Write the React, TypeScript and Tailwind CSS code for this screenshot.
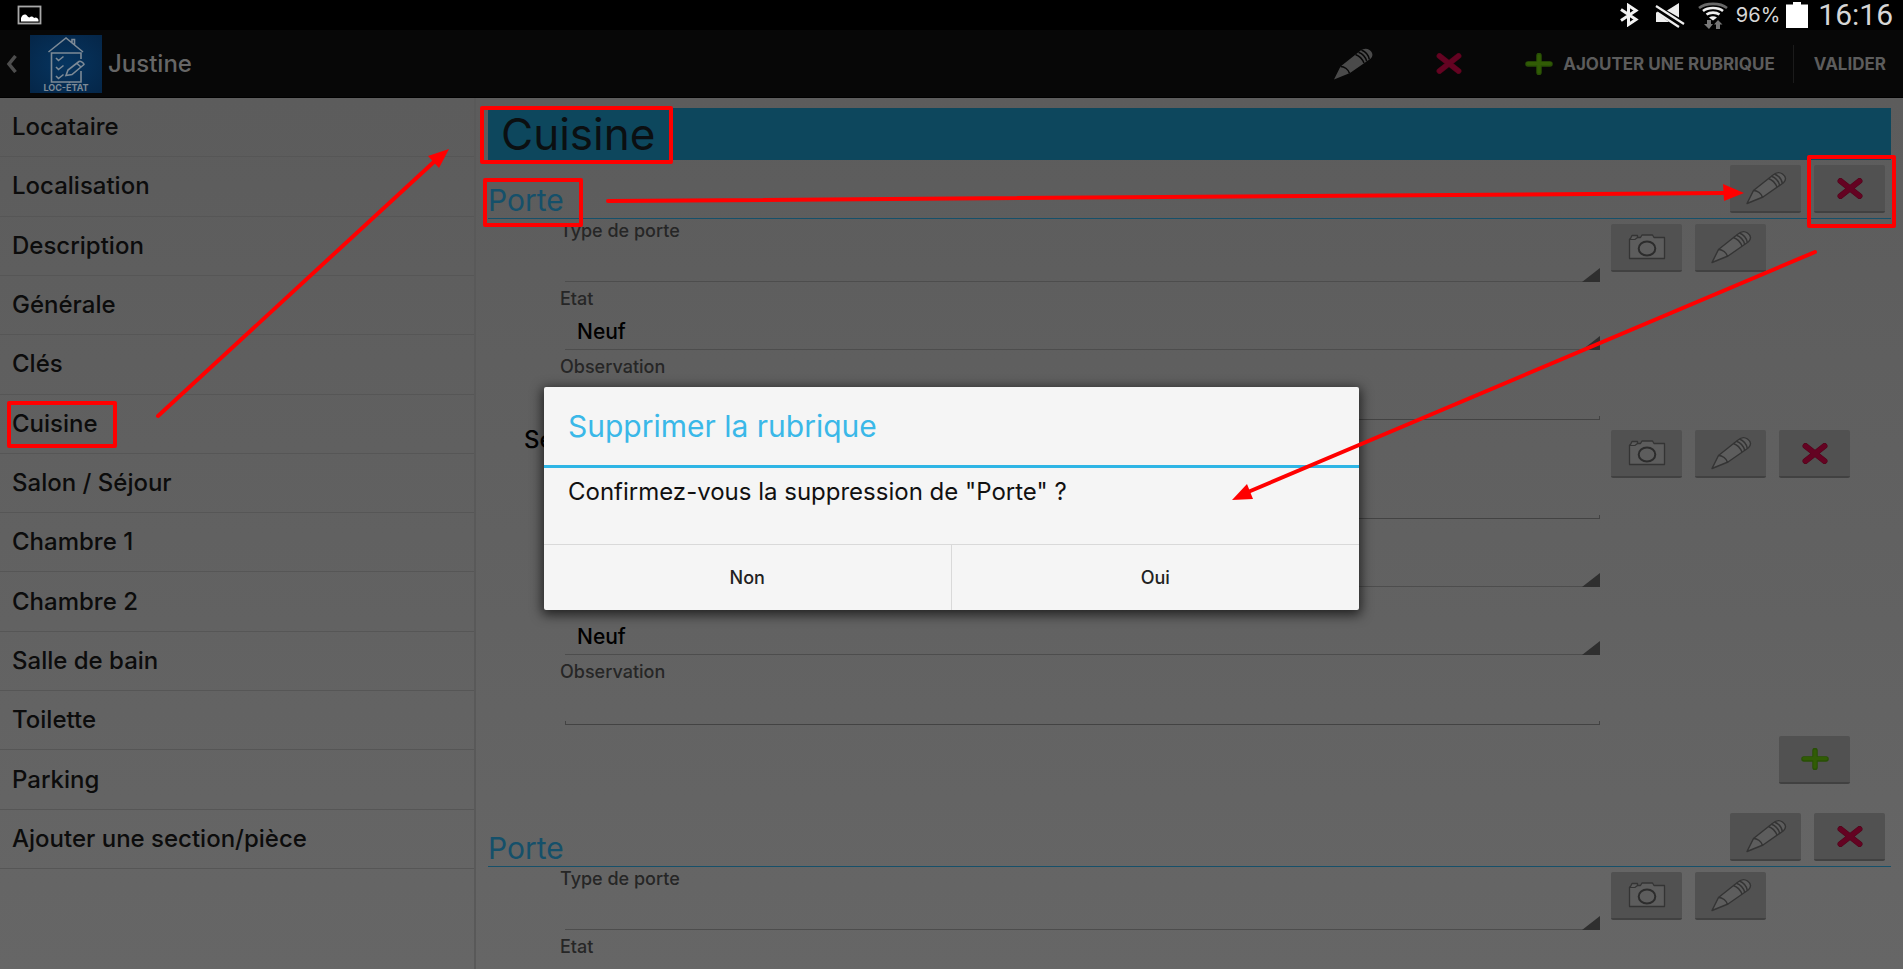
import { useState } from "react";
import type { ReactNode } from "react";

type Field = { label: string; kind: "select" | "text"; value?: string };
type Item = { id: string; title?: string; fields: Field[]; removable?: boolean };
type Section = { id: string; title: string; items: Item[] };

const ROOMS = [
  "Locataire",
  "Localisation",
  "Description",
  "Générale",
  "Clés",
  "Cuisine",
  "Salon / Séjour",
  "Chambre 1",
  "Chambre 2",
  "Salle de bain",
  "Toilette",
  "Parking",
  "Ajouter une section/pièce",
];

const DOOR_FIELDS: Field[] = [
  { label: "Type de porte", kind: "select" },
  { label: "Etat", kind: "select", value: "Neuf" },
  { label: "Observation", kind: "text" },
];

const LOCK_FIELDS: Field[] = [
  { label: "Nombre", kind: "text" },
  { label: "Type", kind: "select" },
  { label: "Etat", kind: "select", value: "Neuf" },
  { label: "Observation", kind: "text" },
];

const SECTIONS: Section[] = [
  {
    id: "porte-1",
    title: "Porte",
    items: [
      { id: "porte-1-a", fields: DOOR_FIELDS },
      { id: "porte-1-b", title: "Serrure", fields: LOCK_FIELDS, removable: true },
    ],
  },
  {
    id: "porte-2",
    title: "Porte",
    items: [{ id: "porte-2-a", fields: DOOR_FIELDS }],
  },
];

function PencilIcon({ solid = false }: { solid?: boolean }) {
  const fill = solid ? "#4a4a4a" : "#5d5d5d";
  const line = solid ? "#070707" : "#343434";
  return (
    <svg width="42" height="34" viewBox="0 0 42 34" fill="none" aria-hidden="true">
      <path
        d="M2 32.5 8.5 19.5 28 4C31 1.5 34.500 .8 37.500 3C41 5.500 41.500 9 38.500 11.700L18 26Z"
        fill={fill}
        stroke={solid ? "none" : line}
        strokeWidth="1.400"
        strokeLinejoin="round"
      />
      <path
        d="M8.500 19.500C12.500 19.500 16.500 22.500 17.500 26.300M23.500 7.500C27.500 9 30.500 12.500 32 16M26.500 5.200C30.500 6.700 33.500 10 34.700 14.200M29.500 3C33 4.500 36.500 8 37.300 12.300"
        stroke={line}
        strokeWidth="1.500"
      />
    </svg>
  );
}

function CameraIcon() {
  return (
    <svg width="38" height="26" viewBox="0 0 38 26" fill="none" aria-hidden="true">
      <path
        d="M1.500 5V24.500H36.500V3.500H26L24.500 1H14L12.500 3.500H9.500V1.500H4L2.500 4.500Z"
        fill="#5d5d5d"
        stroke="#343434"
        strokeWidth="1.300"
        strokeLinejoin="round"
      />
      <path d="M2 5.500H7L9.500 3.500" stroke="#343434" strokeWidth="1.200" />
      <ellipse cx="19" cy="14.500" rx="8.300" ry="7" stroke="#2c2c2c" strokeWidth="2" />
    </svg>
  );
}

function CrossIcon() {
  return (
    <svg width="26" height="21" viewBox="0 0 26 21" aria-hidden="true">
      <path d="M3.500 3 22.500 18M22.500 3 3.500 18" stroke="#4f0519" strokeWidth="6" strokeLinecap="round" />
      <path d="M3.500 3 22.500 18M22.500 3 3.500 18" stroke="#640322" strokeWidth="4.800" strokeLinecap="round" />
    </svg>
  );
}

function PlusIcon() {
  return (
    <svg width="28" height="22" viewBox="0 0 28 22" aria-hidden="true">
      <path d="M3 11H25M14 2.500V19.500" stroke="#284f06" strokeWidth="5.500" strokeLinecap="round" />
      <path d="M3 10.500H25M14 3V19" stroke="#315c05" strokeWidth="3.500" strokeLinecap="round" />
    </svg>
  );
}

function Logo() {
  return (
    <div className="flex h-[58px] w-[72px] flex-col items-center bg-radial from-[#063560] to-[#052648]">
      <svg width="40" height="48" viewBox="0 0 40 48" fill="none" stroke="#7d8a96" strokeWidth="1.600" aria-hidden="true">
        <path d="M2.500 17 20 3 37 17M26 7.500V4.500H28.500V9.500" />
        <path d="M35 24V18H5.500V47H35V36" />
        <path d="M10 23 12.500 25.500 17.500 21.500M10 32 12.500 34.500 17.500 30.500M10 41 12.500 43.500 17.500 39.500" />
        <path d="M20 40.500 22 35 33 26.500C34.500 25.500 38 28 38 29.500L26 39.500Z M31 28.500 35 32" />
      </svg>
      <span className="text-[9px] leading-[10px] font-bold text-[#7d8a96]">LOC-ÉTAT</span>
    </div>
  );
}

function StatusBar() {
  return (
    <div className="flex h-[30px] shrink-0 items-center bg-black pr-[10px] pl-[17px] text-[#d6d6d6]">
      <svg width="26" height="20" viewBox="0 0 26 20" aria-hidden="true">
        <rect x="1.500" y="1.500" width="22" height="17" fill="none" stroke="#a8a8a8" strokeWidth="1.800" />
        <path d="M4 16.500V13C5 10 7 9 8.500 9.500C10 10 10.500 12 12.500 12.500C14 11 16 11.500 17 13C19 11.500 21 13 21.500 15V16.500Z" fill="#fff" />
      </svg>
      <div className="ml-auto flex items-center">
        <svg width="20" height="24" viewBox="0 0 20 24" fill="none" stroke="#f2f2f2" strokeWidth="3" aria-hidden="true">
          <path d="M2 6.500 17 16.500 9.500 21.500V2.500L17 7.500 2 17.500" />
        </svg>
        <svg width="30" height="26" viewBox="0 0 30 26" className="ml-4" aria-hidden="true">
          <path d="M12 8.500 24 1V15.500ZM1 10V20H14Z" fill="#eee" />
          <path d="M1 4 29 22M2 10.500 24 25" stroke="#eee" strokeWidth="2.200" />
        </svg>
        <svg width="30" height="27" viewBox="0 0 30 27" className="ml-[13px]" fill="none" strokeWidth="2.600" aria-hidden="true">
          <path d="M1 6C8 .5 22 .5 29 6" stroke="#686868" />
          <path d="M5 9C10 5 20 5 25 9M8.500 12.500C12 10 18 10 21.500 12.500" stroke="#eee" />
          <path d="M11 15.500C13.500 13.800 16.500 13.800 19 15.500L15 18.500Z" fill="#eee" />
          <path d="M9 18H13V22H15L11 27 6 22H9ZM18 27H22V22.500H24.500L20 18 16 22.500H18Z" fill="#777" />
        </svg>
        <span className="ml-2 text-[20px] leading-[30px]">96%</span>
        <svg width="22" height="26" viewBox="0 0 22 26" className="ml-[6px]" aria-hidden="true">
          <path d="M0 2.500H7V0H15V2.500H22V26H0Z" fill="#fff" />
        </svg>
        <span className="ml-[10px] font-[Roboto,sans-serif] text-[30px] leading-[30px]">16:16</span>
      </div>
    </div>
  );
}

function ActionBar() {
  return (
    <header className="flex h-[68px] shrink-0 items-center border-b border-black bg-[#070707] text-[#666]">
      <button type="button" aria-label="Retour" className="flex h-full w-[30px] items-center pl-[6px]">
        <svg width="11" height="18" viewBox="0 0 11 18" fill="none" stroke="#4d4d4d" strokeWidth="3.500" aria-hidden="true">
          <path d="M9.500 1 3 9 9.500 17" />
        </svg>
      </button>
      <Logo />
      <h1 className="ml-[6px] text-[24px] leading-8 font-medium">Justine</h1>
      <div className="ml-auto flex items-center text-[17px] leading-6 font-bold text-[#5c5c5c]">
        <button type="button" aria-label="Modifier" className="flex w-[96px] justify-center">
          <PencilIcon solid />
        </button>
        <button type="button" aria-label="Supprimer" className="flex w-[96px] justify-center">
          <CrossIcon />
        </button>
        <button type="button" className="ml-7 flex items-center gap-[10px] pr-[18px]">
          <PlusIcon />
          AJOUTER UNE RUBRIQUE
        </button>
        <button type="button" className="border-l border-[#1b1b1b] py-[7px] pr-[17px] pl-5">
          VALIDER
        </button>
      </div>
    </header>
  );
}

function IconButton({ label, children }: { label: string; children: ReactNode }) {
  return (
    <button
      type="button"
      aria-label={label}
      className="flex h-12 w-[71px] items-center justify-center rounded-xs border-b-2 border-[#414141] bg-[#515151]"
    >
      {children}
    </button>
  );
}

function FormField({ id, field }: { id: string; field: Field }) {
  return (
    <div className="mb-[5px]">
      <label htmlFor={id} className="block text-[18px] leading-6 font-medium text-[#262626]">
        {field.label}
      </label>
      {field.kind === "select" ? (
        <div className="relative mx-[5px]">
          <select
            id={id}
            defaultValue={field.value ?? ""}
            className="block h-[39px] w-full appearance-none border-b border-[#4d4d4d] bg-transparent px-3 pt-1 text-[21px] font-medium text-black outline-none"
          >
            <option value={field.value ?? ""}>{field.value ?? ""}</option>
          </select>
          <svg width="18" height="14" viewBox="0 0 18 14" className="pointer-events-none absolute right-0 bottom-0" aria-hidden="true">
            <path d="M18 0V14H0Z" fill="#2f2f2f" />
          </svg>
        </div>
      ) : (
        <div className="relative mx-[5px]">
          <input
            id={id}
            type="text"
            className="block h-[41px] w-full border-b border-[#434343] bg-transparent px-3 text-[21px] text-black outline-none"
          />
          <span className="absolute bottom-0 left-0 h-1 w-px bg-[#434343]" />
          <span className="absolute right-0 bottom-0 h-1 w-px bg-[#434343]" />
        </div>
      )}
    </div>
  );
}

function SectionBlock({ section }: { section: Section }) {
  return (
    <section>
      <div className="flex h-[59px] items-end border-b border-[#16506a] pt-[5px] pr-[6px]">
        <h3 className="flex-1 text-[30px] leading-9 text-[#15506a]">{section.title}</h3>
        <div className="flex gap-[13px] self-start">
          <IconButton label="Modifier la rubrique">
            <PencilIcon />
          </IconButton>
          <IconButton label="Supprimer la rubrique">
            <CrossIcon />
          </IconButton>
        </div>
      </div>
      {section.items.map((item) => (
        <div key={item.id} className="flex gap-[6px] pr-[41px] pl-9">
          <div className="min-w-0 flex-1">
            {item.title && <h4 className="text-[24px] leading-[29px] font-medium text-black">{item.title}</h4>}
            <div className="pl-9">
              {item.fields.map((field, i) => (
                <FormField key={field.label} id={`${item.id}-${i}`} field={field} />
              ))}
            </div>
          </div>
          <div className="flex w-[239px] items-start gap-[13px] pt-[5px]">
            <IconButton label="Photo">
              <CameraIcon />
            </IconButton>
            <IconButton label="Modifier">
              <PencilIcon />
            </IconButton>
            {item.removable && (
              <IconButton label="Supprimer">
                <CrossIcon />
              </IconButton>
            )}
          </div>
        </div>
      ))}
      <div className="flex justify-end pt-[6px] pr-[41px] pb-6">
        <IconButton label="Ajouter">
          <PlusIcon />
        </IconButton>
      </div>
    </section>
  );
}

function ConfirmDialog({ onClose }: { onClose: () => void }) {
  return (
    <div className="absolute inset-x-0 top-7 bottom-0 flex items-center justify-center">
      <div
        role="dialog"
        aria-labelledby="dialog-title"
        className="w-[815px] rounded-xs bg-[#f5f5f5] shadow-[0_3px_12px_2px_rgba(0,0,0,0.65)]"
      >
        <h2 id="dialog-title" className="border-b-3 border-[#2eb5e5] px-6 py-5 text-[30px] leading-[38px] text-[#3ab8e8]">
          Supprimer la rubrique
        </h2>
        <p className="px-6 pt-2 pb-9 text-[24px] leading-8 text-[#111]">
          Confirmez-vous la suppression de "Porte" ?
        </p>
        <div className="grid grid-cols-2 divide-x divide-[#d9d9d9] border-t border-[#d9d9d9] text-[18px] leading-[65px] font-medium text-[#222]">
          <button type="button" onClick={onClose}>
            Non
          </button>
          <button type="button" onClick={onClose}>
            Oui
          </button>
        </div>
      </div>
    </div>
  );
}

// Red frames and arrows that show the order of the steps
function Annotations() {
  return (
    <svg
      width="1903"
      height="969"
      viewBox="0 0 1903 969"
      fill="none"
      stroke="#f00"
      strokeWidth="4"
      strokeLinecap="round"
      strokeLinejoin="round"
      className="pointer-events-none absolute top-0 left-0"
      aria-hidden="true"
    >
      <rect x="9" y="403" width="106" height="43" />
      <rect x="482" y="108" width="189" height="54" />
      <rect x="485" y="180" width="96" height="45" />
      <rect x="1809" y="157" width="85" height="69" />
      <path d="M158 416 436 160M608 201 1726 193M1815 252 1248 492" />
      <g fill="#f00" stroke="none">
        <path d="M449 149 428 156 439 168Z" />
        <path d="M1744 193 1723 184 1724 201Z" />
        <path d="M1232 500 1247 484 1253 499Z" />
      </g>
    </svg>
  );
}

export default function App() {
  const [room, setRoom] = useState("Cuisine");
  const [confirming, setConfirming] = useState(true);

  return (
    <div className="relative flex h-screen flex-col overflow-hidden bg-black font-[Inter,Roboto,sans-serif]">
      <StatusBar />
      <ActionBar />
      <div className="flex min-h-0 flex-1 bg-linear-to-b from-[#5c5c5c] to-[#666]">
        <nav className="w-[476px] shrink-0 border-r-2 border-[#595959]">
          <ul className="grid h-[771px] auto-rows-fr">
            {ROOMS.map((name) => (
              <li key={name} className="border-b border-[#565656]">
                <button
                  type="button"
                  onClick={() => setRoom(name)}
                  className="h-full w-full pl-3 text-left text-[24px] leading-8 font-medium text-[#0c0c0c]"
                >
                  {name}
                </button>
              </li>
            ))}
          </ul>
        </nav>
        <main className="min-w-0 flex-1 overflow-hidden pt-[10px] pr-3 pl-3">
          <h2 className="bg-[#0d475d] pl-[13px] text-[44px] leading-[52px] text-[#0b0f11]">{room}</h2>
          {SECTIONS.map((section) => (
            <SectionBlock key={section.id} section={section} />
          ))}
        </main>
      </div>
      {confirming && <ConfirmDialog onClose={() => setConfirming(false)} />}
      <Annotations />
    </div>
  );
}
